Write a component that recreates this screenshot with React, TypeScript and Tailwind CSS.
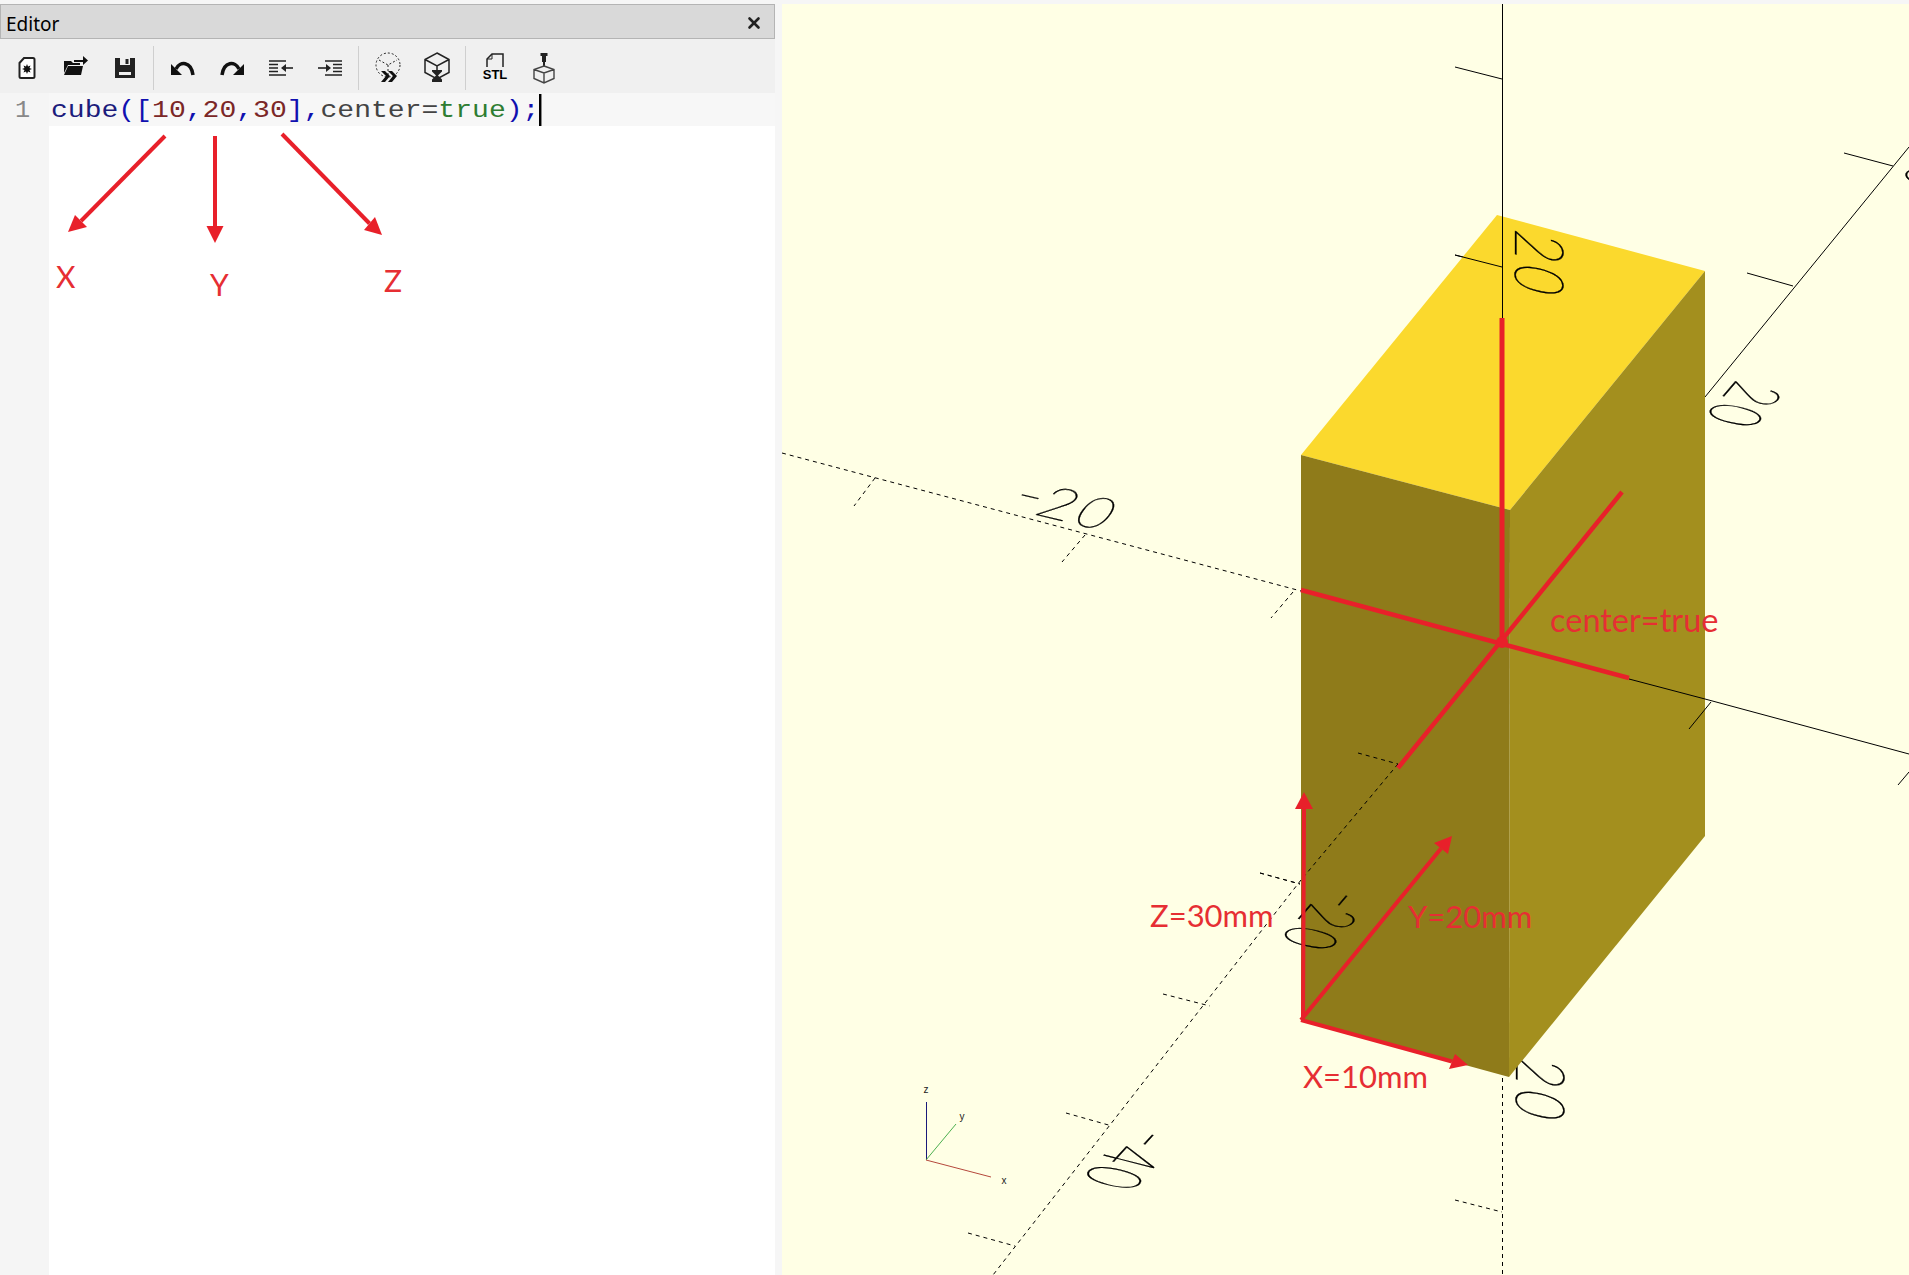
import { X } from "lucide-react";
import type { ReactNode } from "react";

type Pt = [number, number];

function Seg({ a, b, dash, color = "#000", w = 1 }: { a: Pt; b: Pt; dash?: boolean; color?: string; w?: number }) {
  return <line x1={a[0]} y1={a[1]} x2={b[0]} y2={b[1]} stroke={color} strokeWidth={w} strokeDasharray={dash ? "4 4" : undefined} />;
}

function Arrow({ from, tip, base }: { from: Pt; tip: Pt; base: [Pt, Pt] }) {
  const mid: Pt = [(base[0][0] + base[1][0]) / 2, (base[0][1] + base[1][1]) / 2];
  return (
    <g>
      <line x1={from[0]} y1={from[1]} x2={mid[0]} y2={mid[1]} stroke="#e8202a" strokeWidth={4} />
      <polygon points={`${tip} ${base[0]} ${base[1]}`} fill="#e8202a" />
    </g>
  );
}

// axis numbers sit on the 3D planes, so they get a matrix per label
function AxisText({ m, anchor = "start", children }: { m: number[]; anchor?: "start" | "end"; children: string }) {
  return (
    <text transform={`matrix(${m.join(" ")})`} textAnchor={anchor} fontFamily="Inter, 'Liberation Sans', sans-serif" fontWeight={100} fontSize={10} fill="#000" stroke="#000" strokeWidth={0.05}>
      {children}
    </text>
  );
}

function Viewport() {
  return (
    <svg viewBox="782 4 1127 1271" className="block w-[1127px] h-[1271px]">
      {/* axes behind the cube */}
      <Seg a={[782, 453]} b={[1301, 591]} dash />
      <Seg a={[875, 478]} b={[854, 506]} dash />
      <Seg a={[1085, 535]} b={[1062, 562]} dash />
      <Seg a={[1293, 592]} b={[1271, 618]} dash />
      <Seg a={[1502.5, 4]} b={[1502.5, 320]} />
      <Seg a={[1455, 67]} b={[1502, 79]} />
      <Seg a={[1455, 255]} b={[1502, 267]} />
      <Seg a={[1502.5, 1070]} b={[1502.5, 1275]} dash />
      <Seg a={[1455, 1200]} b={[1502, 1212]} dash />
      <Seg a={[1705, 397]} b={[1909, 147]} />
      <Seg a={[1793, 286]} b={[1747, 273]} />
      <Seg a={[1893, 166]} b={[1844, 153]} />
      <Seg a={[1301, 880]} b={[993, 1275]} dash />
      <Seg a={[1260, 873]} b={[1300, 884]} dash />
      <Seg a={[1163, 994]} b={[1210, 1006]} dash />
      <Seg a={[1066, 1113]} b={[1112, 1126]} dash />
      <Seg a={[968, 1233]} b={[1015, 1246]} dash />
      <Seg a={[1705, 699]} b={[1909, 754]} />
      <Seg a={[1909, 772]} b={[1898, 785]} />

      <AxisText m={[6, 1.45, -3, 3.85, 1103, 531]} anchor="end">-20</AxisText>
      <AxisText m={[0, 5.3, -6.6, -1.5, 1516, 1051]}>20</AxisText>
      <AxisText m={[-2.9, 3.4, -6.6, -1.65, 1738, 378]}>20</AxisText>
      <AxisText m={[-2.9, 3.4, -6.6, -1.65, 1933, 142]}>40</AxisText>
      <AxisText m={[-3.1, 3.4, -6.9, -1.75, 1080, 1181]} anchor="end">-40</AxisText>

      {/* cube */}
      <polygon points="1497,215 1705,271 1510,510 1301,455" fill="#fbd92d" />
      <polygon points="1705,271 1705,836 1509,1077 1510,510" fill="#a38f1e" />
      <polygon points="1301,455 1510,510 1509,1077 1301,1020" fill="#8f7b1a" />

      {/* what shows through the cube */}
      <Seg a={[1455, 255]} b={[1502, 267]} />
      <Seg a={[1502.5, 215]} b={[1502.5, 320]} />
      <Seg a={[1629, 679]} b={[1705, 699]} />
      <Seg a={[1711, 702]} b={[1689, 729]} />
      <AxisText m={[0, 5.3, -6.6, -1.5, 1515, 226]}>20</AxisText>
      <Seg a={[1398, 764]} b={[1301, 880]} dash />
      <Seg a={[1358, 753]} b={[1398, 764]} dash />
      <Seg a={[1260, 873]} b={[1300, 884]} dash />
      <AxisText m={[-2.9, 3.4, -6.6, -1.65, 1278, 942]} anchor="end">-20</AxisText>

      {/* center cross */}
      <Seg a={[1502, 318]} b={[1502, 642]} color="#e8202a" w={5} />
      <Seg a={[1301, 590]} b={[1629, 678]} color="#e8202a" w={4.5} />
      <Seg a={[1622, 492]} b={[1398, 768]} color="#e8202a" w={4.5} />
      <circle cx={1502} cy={642} r={6} fill="#e8202a" />

      {/* dimension arrows */}
      <Arrow from={[1303, 1022]} tip={[1304, 792]} base={[[1295, 809], [1313, 809]]} />
      <Arrow from={[1301, 1020]} tip={[1452, 836]} base={[[1434, 843], [1448, 854]]} />
      <Arrow from={[1301, 1020]} tip={[1468, 1065]} base={[[1455, 1054], [1449, 1069]]} />

      {/* axis gizmo */}
      <Seg a={[926.5, 1102]} b={[926.5, 1160]} color="#1a1a7a" />
      <Seg a={[926, 1160]} b={[956, 1124]} color="#4caf50" />
      <Seg a={[926, 1160]} b={[991, 1177]} color="#b5483c" />
      <text x={926} y={1093} textAnchor="middle" fontSize={10} fontFamily="Liberation Sans, sans-serif" fill="#222">z</text>
      <text x={962} y={1120} textAnchor="middle" fontSize={10} fontFamily="Liberation Sans, sans-serif" fill="#222">y</text>
      <text x={1004} y={1184} textAnchor="middle" fontSize={10} fontFamily="Liberation Sans, sans-serif" fill="#222">x</text>
    </svg>
  );
}

const ic = "w-[26px] h-[26px]";

const icons: Record<string, ReactNode> = {
  new: (
    <svg viewBox="0 0 26 26" className={ic}>
      <path d="M10 3h9a1.500 1.500 0 0 1 1.500 1.500v17a1.500 1.500 0 0 1-1.500 1.500H7a1.500 1.500 0 0 1-1.500-1.500V8z" fill="#fff" stroke="#222" strokeWidth={2} />
      <path d="M13 9l1 2.500 2.500-1-1 2.500 2.500 1-2.500 1 1 2.500-2.500-1-1 2.500-1-2.500-2.500 1 1-2.500-2.500-1 2.500-1-1-2.500 2.500 1z" fill="#111" />
    </svg>
  ),
  open: (
    <svg viewBox="0 0 26 26" className={ic}>
      <path d="M1 6h7l2 2h7v2H5l-4 8z" fill="#111" />
      <path d="M5 11h15l-2 9H1z" fill="#111" />
      <path d="M11 5h9V1l5 4.500-5 4.500V7h-9z" fill="#111" />
    </svg>
  ),
  save: (
    <svg viewBox="0 0 26 26" className={ic}>
      <path d="M3 3h20v20H3z" fill="#222" />
      <path d="M8 3h10v7H8z" fill="#f0f0f0" />
      <path d="M13.500 4h3v5h-3z" fill="#222" />
      <path d="M7 17h12v3H7z" fill="#f0f0f0" />
    </svg>
  ),
  undo: (
    <svg viewBox="0 0 26 26" className={ic}>
      <path d="M6 14C10 6 21 6 23 20" fill="none" stroke="#111" strokeWidth={3.500} />
      <path d="M1 9v11h11z" fill="#111" />
    </svg>
  ),
  redo: (
    <svg viewBox="0 0 26 26" className={ic}>
      <path d="M20 14C16 6 5 6 3 20" fill="none" stroke="#111" strokeWidth={3.500} />
      <path d="M25 9v11H14z" fill="#111" />
    </svg>
  ),
  unindent: (
    <svg viewBox="0 0 26 26" className={ic}>
      <path d="M1 6h17M1 13h9M1 16.500h9M1 9.500h9M1 20h17" fill="none" stroke="#222" strokeWidth={1.300} />
      <path d="M25 13H14" stroke="#222" strokeWidth={1.600} />
      <path d="M13 13l5-4v8z" fill="#222" />
    </svg>
  ),
  indent: (
    <svg viewBox="0 0 26 26" className={ic}>
      <path d="M8 6h17M16 9.500h9M16 13h9M16 16.500h9M8 20h17" fill="none" stroke="#222" strokeWidth={1.300} />
      <path d="M1 13h11" stroke="#222" strokeWidth={1.600} />
      <path d="M14 13l-5-4v8z" fill="#222" />
    </svg>
  ),
  preview: (
    <svg viewBox="0 0 28 32" className="w-[28px] h-[32px]">
      <circle cx={14} cy={13} r={12} fill="none" stroke="#222" strokeWidth={1} strokeDasharray="2 2" />
      <path d="M5 8l9 5 9-5M14 13v10" fill="none" stroke="#222" strokeWidth={1} strokeDasharray="2 2" />
      <path d="M7 19l5 5-5 6h4l5-6-5-5zM14 19l5 5-5 6h4l5-6-5-5z" fill="#111" />
    </svg>
  ),
  render: (
    <svg viewBox="0 0 28 32" className="w-[28px] h-[32px]">
      <path d="M14 1l12 6.500v13L14 27 2 20.500v-13zM2 7.500L14 14l12-6.500M14 14v4" fill="none" stroke="#222" strokeWidth={1.500} />
      <path d="M9 18h10v1.500l-4 4 4 4V30H9v-2.500l4-4-4-4z" fill="#222" />
    </svg>
  ),
  stl: (
    <svg viewBox="0 0 30 32" className="w-[30px] h-[32px]">
      <path d="M7 15V7l5-5h11v13" fill="none" stroke="#222" strokeWidth={1.500} />
      <path d="M12 2v5H7" fill="none" stroke="#222" strokeWidth={1} />
      <text x={15} y={27} textAnchor="middle" fontFamily="Liberation Sans, sans-serif" fontWeight={700} fontSize={13} fill="#000">STL</text>
    </svg>
  ),
  print: (
    <svg viewBox="0 0 26 32" className="w-[26px] h-[32px]">
      <path d="M9.500 1h7v3h-1.500v6h-4v-6H9.500z" fill="#222" />
      <path d="M13 10v4" stroke="#222" strokeWidth={2} />
      <path d="M13 14l10 3.500v9L13 31 3 26.500v-9zM3 17.500L13 21l10-3.500M13 21v10" fill="none" stroke="#444" strokeWidth={1.400} />
    </svg>
  ),
};

function ToolBtn({ name }: { name: string }) {
  return <div className="w-[49px] flex items-center justify-center">{icons[name]}</div>;
}

function Sep() {
  return <div className="w-px h-[44px] mx-[4px] bg-[#cfcfcf]" />;
}

function Toolbar() {
  return (
    <div className="h-[54px] pl-[2px] pt-[3px] flex items-center bg-[#f0f0f0]">
      <ToolBtn name="new" />
      <ToolBtn name="open" />
      <ToolBtn name="save" />
      <Sep />
      <ToolBtn name="undo" />
      <ToolBtn name="redo" />
      <ToolBtn name="unindent" />
      <ToolBtn name="indent" />
      <Sep />
      <ToolBtn name="preview" />
      <ToolBtn name="render" />
      <Sep />
      <ToolBtn name="stl" />
      <ToolBtn name="print" />
    </div>
  );
}

function Code() {
  return (
    <div className="flex-1 relative flex bg-white font-['Liberation_Mono',monospace]">
      <div className="w-[49px] bg-[#f5f5f5] shrink-0">
        <div className="h-[33px] pl-[15px] pt-[3px] flex items-center text-[23px] text-[#888]">
          <span className="origin-left scale-x-[1.1]">1</span>
        </div>
      </div>
      <div className="flex-1">
        <div className="h-[33px] pl-[2px] flex items-center bg-[#f7f7f7] text-[23px] whitespace-pre">
          <span className="origin-left scale-x-[1.22] pt-[3px] flex items-center">
            <span className="text-[#1c1c7c]">cube</span>
            <span className="text-[#1010b0]">([</span>
            <span className="text-[#7b2727]">10</span>
            <span className="text-[#1010b0]">,</span>
            <span className="text-[#7b2727]">20</span>
            <span className="text-[#1010b0]">,</span>
            <span className="text-[#7b2727]">30</span>
            <span className="text-[#1010b0]">],</span>
            <span className="text-[#444]">center=</span>
            <span className="text-[#2e7d32]">true</span>
            <span className="text-[#1010b0]">);</span>
            <span className="w-[2px] h-[32px] -mt-[3px] bg-black" />
          </span>
        </div>
      </div>
      <svg viewBox="0 93 775 240" className="absolute left-0 top-0 w-[775px] h-[240px]">
        <Arrow from={[165, 136]} tip={[68, 232]} base={[[75, 215], [87, 227]]} />
        <Arrow from={[215, 136]} tip={[215, 243]} base={[[206.500, 226], [223.500, 226]]} />
        <Arrow from={[282, 134]} tip={[382, 235]} base={[[364, 230], [375, 217]]} />
      </svg>
      <Note className="left-[56px] top-[165px] text-[30px]">X</Note>
      <Note className="left-[210px] top-[173px] text-[30px]">Y</Note>
      <Note className="left-[384px] top-[169px] text-[30px]">Z</Note>
    </div>
  );
}

function Note({ className, children }: { className: string; children: string }) {
  return <span className={`absolute font-['Lato',sans-serif] leading-[36px] text-[#e62e33] whitespace-nowrap ${className}`}>{children}</span>;
}

export default function App() {
  return (
    <div className="w-[1909px] h-[1275px] overflow-hidden pt-[4px] flex bg-[#f6f6f6]">
      <div className="w-[775px] flex flex-col shrink-0">
        <div className="h-[35px] pt-[5px] flex items-center justify-between pl-[5px] pr-[11px] bg-[#d9d9d9] border border-[#b4b4b4] font-['Noto_Sans',sans-serif] text-[19px] text-black">
          <span>Editor</span>
          <X className="w-[18px] h-[18px] -mt-[3px] text-[#222]" strokeWidth={3.500} />
        </div>
        <Toolbar />
        <Code />
      </div>
      <div className="ml-[7px] flex-1 relative bg-[#ffffe5]">
        <Viewport />
        <Note className="left-[768px] top-[598px] text-[32.500px]">center=true</Note>
        <Note className="left-[368px] top-[893px] text-[31px]">Z=30mm</Note>
        <Note className="left-[626px] top-[894px] text-[31px]">Y=20mm</Note>
        <Note className="left-[521px] top-[1054px] text-[31px]">X=10mm</Note>
      </div>
    </div>
  );
}
